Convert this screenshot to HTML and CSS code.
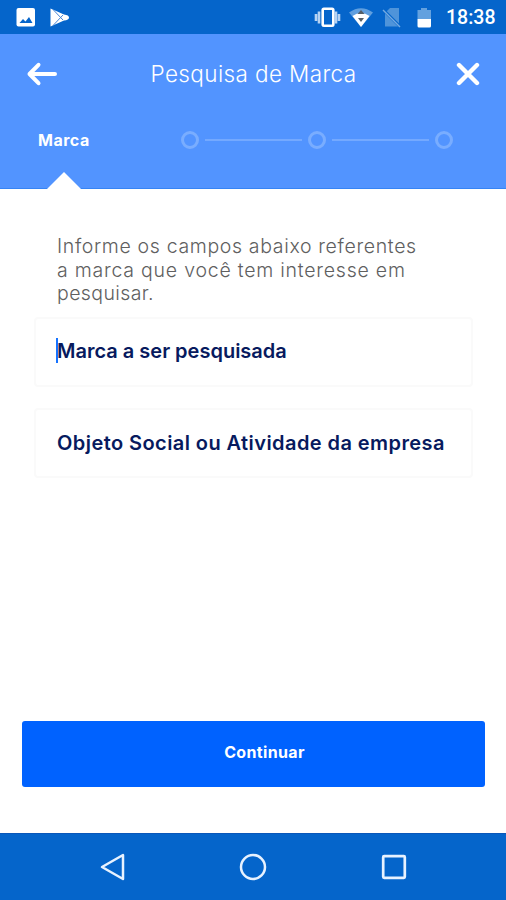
FILE: index.html
```html
<!DOCTYPE html>
<html lang="pt-BR">
<head>
<meta charset="utf-8">
<title>Pesquisa de Marca</title>
<link rel="stylesheet" href="styles.css">
</head>
<body>
<div class="screen">
  <div class="status">
    <svg class="status-icons" width="440" height="34" viewBox="0 0 440 34">
      <rect x="16.5" y="8" width="18.5" height="18.5" rx="2" fill="#fff"/>
      <path d="M19.5 23l3.5-4 2.5 2.5 3.5-4.500 3.500 6z" fill="#0565cb"/>
      <path d="M50.500 8.500L64 14.500Q69 15 69 17.500T64 20.500L50.500 26.500z" fill="#fff"/>
      <path d="M53 9.500l10 10.500M53 25.500l10-10.500" stroke="#4685d6" stroke-width="1"/>
      <path d="M62 10.500l5 3.500M62 24.500l5-3.500" stroke="#0565cb" stroke-width="1"/>
      <path d="M316 14v7M319 11.500v12M336 11.500v12M339 14v7" stroke="#b7d3f3" stroke-width="2.600"/>
      <rect x="322.700" y="8.700" width="10.600" height="17" rx="1.200" fill="none" stroke="#fff" stroke-width="2.600"/>
      <path d="M349 12.500Q361 4 373 12.500L361 27z" fill="#609fdf"/>
      <path d="M352.500 16Q361 10 369.500 16L361 27z" fill="#fff"/>
      <path d="M361 10l3.500 4h-7zM361 22l3-4h-6z" fill="#555f68"/>
      <path d="M385 13l5-5h9v18.500h-14z" fill="#4f94da"/>
      <path d="M382.500 9l18 18" stroke="#0565cb" stroke-width="3"/>
      <path d="M383 10l17 17" stroke="#74aae2" stroke-width="1.500"/>
      <path d="M417.500 10h3.500V8h6v2h4v9h-13.500z" fill="#63a1df"/>
      <path d="M417.500 19H431v7q0 1.500-1.500 1.500H419q-1.500 0-1.500-1.500z" fill="#fff"/>
    </svg>
    <span class="clock">18:38</span>
  </div>
  <header class="header">
    <div class="toolbar">
      <svg width="32" height="28" viewBox="0 0 32 28"><path d="M29 14H3.500M12.500 4.800L3.500 14l9 9.200" fill="none" stroke="#fff" stroke-width="4" stroke-linecap="round" stroke-linejoin="round"/></svg>
      <h1 class="title">Pesquisa de Marca</h1>
      <svg width="32" height="24" viewBox="-4 0 32 24"><path d="M3 3l18 18M21 3L3 21" stroke="#fff" stroke-width="4.400" stroke-linecap="round"/></svg>
    </div>
    <div class="steps">
      <span class="step-current">Marca</span>
      <div class="track"><i class="dot"></i><i class="line"></i><i class="dot"></i><i class="line"></i><i class="dot"></i></div>
    </div>
    <svg class="pointer" width="34" height="17" viewBox="0 0 34 17"><path d="M0 17L17 0l17 17z" fill="#fff"/></svg>
  </header>
  <main class="content">
    <p class="intro"><span class="l1">Informe os campos abaixo referentes</span><br><span class="l2">a marca que você tem interesse em</span><br><span class="l3">pesquisar.</span></p>
    <div class="field focused"><i class="caret"></i><span class="f1">Marca a ser pesquisada</span></div>
    <div class="field"><span class="f2">Objeto Social ou Atividade da empresa</span></div>
    <button class="submit">Continuar</button>
  </main>
  <nav class="nav">
    <svg width="28" height="30" viewBox="0 0 28 30"><path d="M25 3v24L4 15z" fill="none" stroke="#e8f2ff" stroke-width="2.500" stroke-linejoin="round"/></svg>
    <svg width="28" height="30" viewBox="0 0 28 30"><circle cx="14" cy="15" r="12" fill="none" stroke="#e8f2ff" stroke-width="2.500"/></svg>
    <svg width="28" height="30" viewBox="0 0 28 30"><rect x="3.200" y="4.200" width="21.600" height="21.600" rx="1" fill="none" stroke="#e8f2ff" stroke-width="2.700"/></svg>
  </nav>
</div>
</body>
</html>
```

FILE: styles.css
```css
* { box-sizing: border-box; }
body { margin: 0; font-family: Inter, "Liberation Sans", sans-serif; background: #fff; }
svg { display: block; flex: none; }
.screen { width: 506px; height: 900px; display: flex; flex-direction: column; overflow: hidden; }
.status { height: 34px; background: #0565cb; display: flex; align-items: center; color: #fff; flex: none; }
.clock { font: 500 19.5px/34px Roboto, sans-serif; margin-left: 6px; padding-top: 2px; white-space: nowrap; }
.header { position: relative; height: 155px; background: #5294ff; border-bottom: 1px solid #3584f5; flex: none; color: #fff; }
.toolbar { height: 80px; padding: 0 22px 0 26px; display: flex; align-items: center; justify-content: space-between; }
.title { margin: 0 3px 0 0; padding-bottom: 2px; font-size: 22.5px; font-weight: 300; letter-spacing: 0.38px; white-space: nowrap; }
.steps { height: 52px; display: flex; align-items: center; padding-left: 38px; }
.step-current { width: 143px; font-size: 16px; font-weight: 700; letter-spacing: 0.5px; }
.track { display: flex; align-items: center; width: 272px; }
.dot { width: 18px; height: 18px; border: 3px solid #79adff; border-radius: 50%; flex: none; }
.line { flex: 1; height: 2px; margin: 0 6px; background: #74a9ff; }
.pointer { position: absolute; left: 47px; bottom: -1px; }
.content { flex: 1; display: flex; flex-direction: column; padding: 46px 21px 46px 22px; }
.intro { margin: 0 0 11px 35px; font-size: 19.5px; line-height: 23.5px; font-weight: 300; color: #606060; white-space: nowrap; }
.l1 { letter-spacing: 0.65px; }
.l2 { letter-spacing: 0.77px; }
.l3 { letter-spacing: 0.4px; }
.field { position: relative; height: 70px; margin: 0 12px 21px; border: 2px solid #fafafa; border-radius: 4px; padding-left: 21px; display: flex; align-items: center; color: #071a5e; font-size: 20px; font-weight: 600; white-space: nowrap; }
.f1 { padding-bottom: 2px; }
.f2 { letter-spacing: 0.43px; padding-top: 1px; }
.caret { position: absolute; left: 20px; top: 19px; width: 2px; height: 25px; background: #1673ff; }
.submit { margin-top: auto; height: 66px; border: 0; border-radius: 3px; background: #0062ff; color: #fff; font: 700 16px Inter, sans-serif; letter-spacing: 0.35px; padding: 0 0 5px 22px; flex: none; }
.nav { height: 67px; background: #0565cb; border-top: 1px solid #0a57b9; display: flex; align-items: center; justify-content: center; gap: 113px; flex: none; }
```
